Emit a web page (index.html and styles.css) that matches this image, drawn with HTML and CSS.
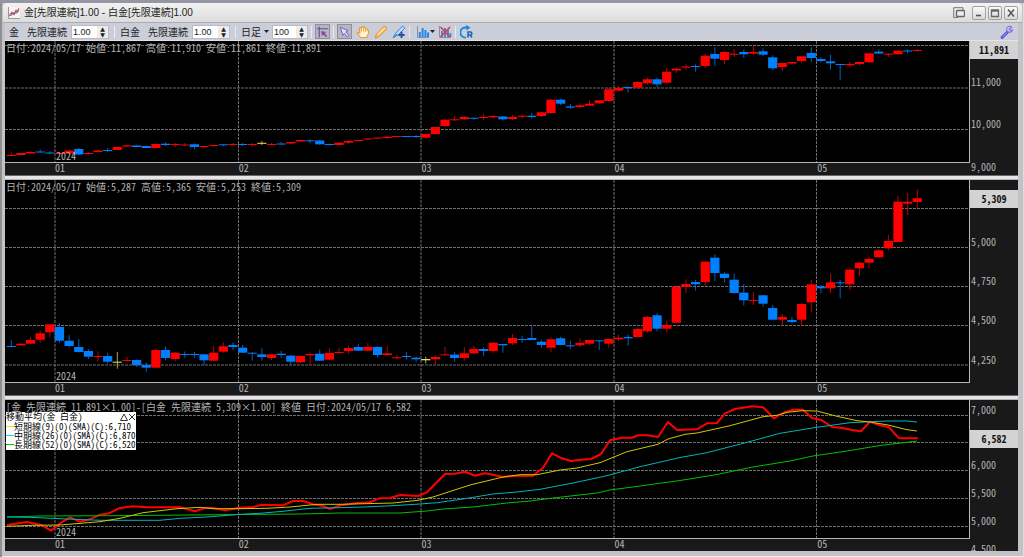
FILE: index.html
```html
<!DOCTYPE html>
<html lang="ja">
  <head>
    <meta charset="utf-8" />
    <title>金[先限連続]1.00 - 白金[先限連続]1.00</title>
    <link rel="stylesheet" href="styles.css">
  </head>
  <body>
    <div class="window">
      <header class="titlebar">
        <svg class="app-icon" viewBox="0 0 12 12">
          <rect x="0" y="0" width="12" height="12" fill="#f4f4f4" />
          <path d="M0.5 0V11.5H12" fill="none" stroke="#999" />
          <path d="M1.5 9L4 5.5L6 7.5L8 3.5L9 5L11 1.5" fill="none" stroke="#d23a3a" stroke-width="1.3" />
          <path d="M1.5 6.5L3.5 8.5L6 5L8 6.5L11 4" fill="none" stroke="#5b8fd6" />
        </svg>
        <h1>金[先限連続]1.00 - 白金[先限連続]1.00</h1>
        <button type="button" class="detach" aria-label="切り離し">
          <svg viewBox="0 0 12 12">
            <path d="M5 10.5H0.7V0.7H10V3" fill="none" stroke="#777" />
            <rect x="3.5" y="3.5" width="8" height="6" rx="1" fill="#eee" stroke="#666" stroke-width="1.4" />
          </svg>
        </button>
        <button type="button" class="win-btn" aria-label="最小化">
          <svg viewBox="0 0 10 10"><path d="M2 7.5H7" stroke="#555" stroke-width="1.6" /></svg>
        </button>
        <button type="button" class="win-btn" aria-label="最大化">
          <svg viewBox="0 0 10 10"><path d="M1.5 2H8.5V8.5H1.5ZM1.5 3H8.5" fill="none" stroke="#666" stroke-width="1.3" /></svg>
        </button>
        <button type="button" class="win-btn" aria-label="閉じる">
          <svg viewBox="0 0 10 10"><path d="M2 1.5L8 8.5M8 1.5L2 8.5" stroke="#555" stroke-width="1.5" /></svg>
        </button>
      </header>

      <div class="toolbar">
        <span class="brand gold">金</span>
        <label for="ratio1">先限連続</label>
        <div class="spinner">
          <input type="text" id="ratio1" value="1.00" />
          <span class="spin"><button type="button" aria-label="増やす">▲</button><button type="button" aria-label="減らす">▼</button></span>
        </div>
        <i class="sep"></i>
        <span class="brand">白金</span>
        <label for="ratio2">先限連続</label>
        <div class="spinner">
          <input type="text" id="ratio2" value="1.00" />
          <span class="spin"><button type="button" aria-label="増やす">▲</button><button type="button" aria-label="減らす">▼</button></span>
        </div>
        <i class="sep"></i>
        <div class="period">
          <select id="period" aria-label="足種">
            <option>日足</option>
            <option>週足</option>
            <option>月足</option>
          </select>
          <svg class="caret" viewBox="0 0 5 3"><path d="M0 0H5L2.5 3Z" /></svg>
        </div>
        <div class="spinner bars">
          <input type="text" id="bars" value="100" aria-label="本数" />
          <span class="spin"><button type="button" aria-label="増やす">▲</button><button type="button" aria-label="減らす">▼</button></span>
        </div>
        <i class="sep tight"></i>
        <button type="button" class="tool on" aria-label="十字カーソル">
          <svg viewBox="0 0 14 14">
            <path d="M3.5 1V13M1 3.5H13" stroke="#6a4a9c" stroke-width="1.2" />
            <path d="M5.5 6L11 7L9.3 8.4L12 11.2L10.8 12.4L8 9.7L6.5 11.2Z" fill="#8a3fb0" />
          </svg>
        </button>
        <i class="sep tight"></i>
        <button type="button" class="tool on" aria-label="選択">
          <svg viewBox="0 0 14 14">
            <path d="M2.5 2L10.8 5.4L8.4 6.9L11.8 10.8L10 12.3L6.8 8.5L5.2 10.6Z" fill="#e6dcff" stroke="#6b55c4" />
          </svg>
        </button>
        <button type="button" class="tool" aria-label="移動">
          <svg viewBox="0 0 14 14">
            <path d="M4.5 12.5L1.2 8.2Q1.4 6.6 3.8 8L3.5 3.2Q4.6 2 5.3 3.4L5.9 2Q7 1 7.6 2.4L8 2.2Q9.2 1.8 9.6 3.4L9.9 3.5Q11.2 3.4 11.5 5Q13 5.6 12.5 8.4L10.6 12.5Z" fill="#fff3d8" stroke="#eb9a36" stroke-width="1.2" />
            <path d="M5.5 3.5V6.5M7.7 3V6.3M9.7 4V6.7" stroke="#eb9a36" />
          </svg>
        </button>
        <button type="button" class="tool" aria-label="ライン">
          <svg viewBox="0 0 14 14">
            <path d="M10.5 1L13 3.5L5 11.5L1.2 13L2.4 9.2Z" fill="#ffc45d" stroke="#e38b28" />
            <path d="M4 9.5L10.5 3" stroke="#ffe9b8" stroke-width="1.3" />
          </svg>
        </button>
        <button type="button" class="tool" aria-label="ライン編集">
          <svg viewBox="0 0 14 14">
            <path d="M10.5 1L12.8 3.2L6.5 9.5L1.2 12.6L3.6 8.2Z" fill="#b9dcff" stroke="#3f7fd0" />
            <path d="M1 13L5 8.8" stroke="#3f7fd0" />
            <path d="M9.5 6.8V13M6.4 9.9H12.6" stroke="#27529f" stroke-width="2" />
          </svg>
        </button>
        <i class="sep"></i>
        <button type="button" class="tool menu" aria-label="テクニカル">
          <svg viewBox="0 0 14 14">
            <path d="M1.5 1V12.5H13" fill="none" stroke="#8292ae" />
            <path d="M3.8 12V7M6.6 12V3M9.4 12V5M12 12V7.5" stroke="#2388e8" stroke-width="2" />
          </svg>
        </button>
        <svg class="caret" viewBox="0 0 5 3"><path d="M0 0H5L2.5 3Z" /></svg>
        <button type="button" class="tool" aria-label="テクニカル削除">
          <svg viewBox="0 0 14 14">
            <path d="M1.5 1V12.5H13" fill="none" stroke="#8292ae" />
            <path d="M4 12V6M7 12V3M10 12V5M12.4 12V8" stroke="#3b8fe0" stroke-width="2" />
            <path d="M2.5 2L12 12M12 2L2.5 12" stroke="#e0394a" stroke-width="1.7" />
          </svg>
        </button>
        <i class="sep tight"></i>
        <button type="button" class="tool" aria-label="更新">
          <svg viewBox="0 0 14 14">
            <path d="M6 12.5A5 5 0 1 1 7 2.8" fill="none" stroke="#1b86dc" stroke-width="1.8" />
            <path d="M6 0L10.5 2.6L6.5 5.6Z" fill="#1b86dc" />
            <path d="M8 12.5V7H10.4A1.5 1.5 0 0 1 10.4 10H8.5M10 10L12 12.5" fill="none" stroke="#1766ba" stroke-width="1.5" />
          </svg>
        </button>
        <button type="button" class="tool settings" aria-label="設定">
          <svg viewBox="0 0 14 14">
            <path d="M2.2 12.4L8 6.6" stroke="#5b50e0" stroke-width="3" stroke-linecap="round" />
            <path d="M11.8 2.4A2.9 2.9 0 1 0 12.4 5L10 5.4L8.9 4Z" fill="#e4e2ff" stroke="#7d74e8" stroke-width="1.2" />
            <path d="M2.4 12.2L7 7.6" stroke="#a9a4f4" />
          </svg>
        </button>
      </div>

      <main class="charts">
        <section class="panel gold-panel" id="goldPanel">
          <div class="plot">
            <svg class="canvas" viewBox="5 41 964 121" preserveAspectRatio="none"></svg>
            <p class="readout">日付:2024/05/17 始値:11,867 高値:11,910 安値:11,861 終値:11,891</p>
            <span class="year">2024</span>
          </div>
          <div class="scale"></div>
          <div class="months"></div>
        </section>

        <section class="panel platinum-panel" id="platinumPanel">
          <div class="plot">
            <svg class="canvas" viewBox="5 180 964 202" preserveAspectRatio="none"></svg>
            <p class="readout">日付:2024/05/17 始値:5,287 高値:5,365 安値:5,253 終値:5,309</p>
            <span class="year">2024</span>
          </div>
          <div class="scale"></div>
          <div class="months"></div>
        </section>

        <section class="panel spread-panel" id="spreadPanel">
          <div class="plot">
            <svg class="canvas" viewBox="5 400 964 138" preserveAspectRatio="none"></svg>
            <p class="readout">[金 先限連続 11,891×1.00]－[白金 先限連続 5,309×1.00] 終値 日付:2024/05/17 6,582</p>
            <div class="legend">
              <div class="legend-head">
                <span>移動平均(金 白金)</span>
                <button type="button" aria-label="折りたたむ"><svg viewBox="0 0 8 8"><path d="M4 1L7.5 7.5H0.5Z" /></svg></button>
                <button type="button" aria-label="閉じる"><svg viewBox="0 0 8 8"><path d="M1 1L7 7M7 1L1 7" /></svg></button>
              </div>
              <div class="legend-row short">短期線(9)(0)(SMA)(C):6,710</div>
              <div class="legend-row middle">中期線(26)(0)(SMA)(C):6,870</div>
              <div class="legend-row long">長期線(52)(0)(SMA)(C):6,520</div>
            </div>
            <span class="year">2024</span>
          </div>
          <div class="scale"></div>
          <div class="months"></div>
        </section>
      </main>
    </div>
    <script src="chart.js"></script>
  </body>
</html>
```

FILE: styles.css
```css
* {
  box-sizing: border-box;
}

body {
  margin: 0;
  background: #a5a5a8;
  font-family: "Noto Sans CJK JP", sans-serif;
  font-size: 10px;
  color: #222;
}

button {
  padding: 0;
  border: none;
  background: none;
  font: inherit;
  cursor: pointer;
}

svg {
  display: block;
}

.window {
  display: flex;
  flex-direction: column;
  height: 100vh;
  min-height: 400px;
  padding: 0 6px 6px 5px;
  background: #c3c3c6;
  border-top: 3px solid #9497a1;
  box-shadow: inset 2px 0 #8f8f91, inset -1px 0 #dcdce4, inset 0 -1px #f0f0f0;
}

/* title bar */
.titlebar {
  display: flex;
  flex: none;
  align-items: center;
  height: 20px;
  margin-left: -2px;
  margin-right: -4px;
  padding: 0 4px 0 5px;
  background: linear-gradient(#f2f2f2, #dcdcdc);
  border-bottom: 1px solid #aaacb2;
  border-radius: 4px 4px 0 0;
}

.app-icon {
  width: 12px;
  height: 12px;
  margin-right: 4px;
}

.titlebar h1 {
  flex: 1;
  margin: 0;
  font-family: "Liberation Sans", "Noto Sans CJK JP", sans-serif;
  font-size: 10px;
  font-weight: normal;
  line-height: 18px;
  white-space: nowrap;
}

.detach {
  margin-right: 5px;
}

.detach svg {
  width: 12px;
  height: 12px;
}

.win-btn {
  display: flex;
  align-items: center;
  justify-content: center;
  width: 14px;
  height: 14px;
  margin-left: 2px;
  background: linear-gradient(#fafafa, #d8d8d8);
  border: 1px solid #a2a2a2;
  border-radius: 2px;
}

.win-btn svg {
  width: 10px;
  height: 10px;
}

/* toolbar */
.toolbar {
  display: flex;
  flex: none;
  align-items: center;
  height: 18px;
  padding: 0 4px;
  background: #cbced8;
  border-bottom: 1px solid #e2e4ea;
  white-space: nowrap;
}

.brand {
  margin-right: 8px;
}

.toolbar label {
  margin-right: 4px;
}

.spinner {
  display: flex;
  width: 38px;
  height: 14px;
  background: #fff;
  border: 1px solid #b9bcc4;
}

.spinner input {
  flex: 1;
  min-width: 0;
  padding: 0 0 0 1px;
  border: none;
  outline: none;
  background: none;
  font-family: "Liberation Sans", sans-serif;
  font-size: 9px;
  line-height: 12px;
  color: #222;
}

.spin {
  display: flex;
  flex-direction: column;
  width: 11px;
  background: #ececec;
}

.spin button {
  height: 6px;
  font-family: "DejaVu Sans", sans-serif;
  font-size: 6px;
  line-height: 6px;
  color: #222;
}

.spinner.bars {
  width: 36px;
}

.sep {
  width: 1px;
  height: 12px;
  margin: 0 5px;
  background: #e9ebf0;
}

.sep.tight {
  margin: 0 3px;
}

.period {
  display: flex;
  align-items: center;
  margin-right: 3px;
}

.period select {
  width: 22px;
  padding: 0;
  border: none;
  outline: none;
  appearance: none;
  background: none;
  font: inherit;
  color: #222;
}

.caret {
  width: 5px;
  height: 3px;
  fill: #222;
  pointer-events: none;
}

.period .caret {
  margin-left: 1px;
}

.tool {
  display: flex;
  align-items: center;
  justify-content: center;
  width: 15px;
  height: 15px;
  margin-right: 3px;
}

.tool svg {
  width: 14px;
  height: 14px;
}

.tool.on {
  background: #b4b6c0;
  border: 1px solid #8e9099;
}

.tool + .sep {
  margin-left: 0;
}

.tool.menu {
  margin-right: 0;
}

.toolbar > .caret {
  margin-right: 2px;
}

.tool.settings {
  margin-left: auto;
  margin-right: 0;
}

/* chart panels */
.charts {
  display: flex;
  flex: 1;
  flex-direction: column;
  gap: 5px;
  min-height: 0;
  background: #e6e4e6;
}

.panel {
  position: relative;
  display: grid;
  grid-template-columns: minmax(0, 1fr) 48px;
  grid-template-rows: minmax(0, 1fr) 12px;
  min-height: 0;
  background: #191919;
  color: #b4b4b4;
  font-feature-settings: "hwid";
}

.panel + .panel {
  box-shadow: 0 -1px #b5b3b5, 0 -4px #e6e4e6, 0 -5px #6a686a;
}

.gold-panel {
  flex: 134 1 0;
}

.platinum-panel {
  flex: 215 1 0;
}

.spread-panel {
  flex: 151 1 0;
}

.plot {
  position: relative;
  min-height: 0;
  overflow: hidden;
  background: #000;
  border-right: 1px solid #b8b8b8;
  border-bottom: 1px solid #b8b8b8;
}

.canvas {
  position: absolute;
  inset: 0;
  width: 100%;
  height: 100%;
}

.readout {
  position: absolute;
  top: 1px;
  left: 1px;
  margin: 0;
  line-height: 11px;
  white-space: nowrap;
}

.year {
  position: absolute;
  left: 51px;
  bottom: 0;
  line-height: 12px;
}

.scale {
  position: relative;
  grid-row: 1 / 3;
  grid-column: 2;
  overflow: hidden;
}

.tick {
  position: absolute;
  left: 1px;
  height: 12px;
  margin-top: -12px;
  line-height: 12px;
}

.last-price {
  position: absolute;
  left: 0;
  right: 0;
  height: 18px;
  background: #d3d3d3;
  color: #111;
  font-weight: bold;
  line-height: 17px;
  text-align: center;
}

.months {
  position: relative;
  grid-row: 2;
  grid-column: 1;
}

.month {
  position: absolute;
  top: -1px;
  line-height: 12px;
}

.grid-line {
  stroke: #6e6e6e;
  stroke-dasharray: 3 1;
  vector-effect: non-scaling-stroke;
}

.up {
  fill: #ff0000;
}

.down {
  fill: #0080ff;
}

.flat {
  fill: #e8e060;
}

.wick {
  opacity: 0.75;
}

.line {
  fill: none;
  stroke-width: 1;
  stroke-linejoin: round;
  vector-effect: non-scaling-stroke;
}

.line.spread {
  stroke: #ff0000;
  stroke-width: 2;
}

.line.short {
  stroke: #d0c800;
}

.line.middle {
  stroke: #00b4bc;
}

.line.long {
  stroke: #00c000;
}

/* moving average legend */
.legend {
  position: absolute;
  top: 12px;
  left: 1px;
  width: 130px;
  padding-bottom: 1px;
  background: #fff;
  color: #000;
  font-size: 9px;
  line-height: 9px;
  white-space: nowrap;
}

.legend-head {
  display: flex;
  height: 10px;
}

.legend-head span {
  flex: 1;
}

.legend-head svg {
  width: 8px;
  height: 8px;
  fill: none;
  stroke: #333;
}

.legend-row {
  display: flex;
  align-items: center;
  height: 9px;
}

.legend-row::before {
  content: "";
  flex: none;
  width: 8px;
  height: 1px;
  background: #f0e800;
}

.legend-row.middle::before {
  background: #00e0e8;
}

.legend-row.long::before {
  background: #00c800;
}
```

FILE: chart.js
```js
const NS = 'http://www.w3.org/2000/svg';
const FIRST_X = 11.3;
const STEP = 9.638;
const BODY = 9.2;

// first bar of each month
const months = [['01', 55], ['02', 238.5], ['03', 421], ['04', 614], ['05', 816.5]];

// one bar per entry: colour, high, body top, body bottom, low
const gold = `r152.3,155,156,156 r153,153,155,155 r151,152,153.5,154 b149.5,151.5,152.5,152.5 b151,152.5,153.5,154
r152,153,154,154 r149.5,150.5,153.5,154 b148,149,154.5,155 r152,153,154,154.5 r150,150.5,152,152.5
b148,150,151,152 r147,147,150,150 r145,145.3,146.5,147 b145,145.5,147,147 b145.5,146,148,148
r143.5,144,148,148 b142.3,143.7,145,146 r143,144,145,147 r143,144.5,145.5,146 b143.5,144.3,147,149.5
r146,146,147,148 r145,145,146,146.5 b144,144.3,145.3,146 r143,144,145,145.3 b143,144,145,146
r143,144,145,146.5 y141,142.8,143.8,145 r143,144,145,145 b142,143.5,144.5,145 r142,142,143.5,144
r139.5,140,141.5,142 b139.5,140.3,141.3,143 b140,140.5,144.3,145 b143.5,144,145,145.5 r142,142.7,145,145
r140.5,141,142.7,144 r139.5,140,141,141 r138,138.5,139.5,140 r137.5,137.6,138.6,138.7 r135.7,136.7,138,139
r136,136,137,137 b136,136,137,137 b135.3,136,137,138 r133.7,134,137.7,138.5 r126.7,127,134,135
r119,119.7,126,127 r115.7,119.3,120.3,120.6 r116,117,119.3,120 b117.7,117.8,118.8,119.7 r113.7,117,118,120.3
r115,116,117.3,118.5 b116,116.5,119.3,120.5 r115,117,119,120 r115,115.7,116.7,118.5 b113,115.7,117,118.3
r112,112.3,116,117 r99,99.7,113,114 b98.7,99.7,103.7,105.3 b104,106.5,107.7,108.7 r103.3,105.3,107,108
r100.3,103.7,105.7,106 r100,100.3,103.3,104 r88,89.3,101,101.5 r86,88,90.7,91.3 b86.5,87,88,92.7
r81,82,87.7,88.5 r77.7,79.3,83.3,84.7 b77.7,79.3,84.3,87.3 r67.7,71.7,82.7,82.7 r67.3,68.7,70.5,73
r64.3,66.5,67.6,70 b64.3,66,67,71.7 r54,55.7,66,68 b47.3,54,58.7,66 r51.5,52,60,64
r49.3,53.7,54.7,57 b49.3,52,54.3,58 r46,52,53.7,54.5 b48.3,51.3,54.7,56 b55.3,57.3,68.3,69.7
r62.7,63,67,70.7 r61.5,62,63.5,65 r56,56.3,61,63 b47.3,53,58,61.7 b57,59,61,62.7
b54.7,61.3,63.3,69.7 b63.7,64,65,80.3 r62,64,65.3,67.3 r61.5,62,64,65.7 r53,53.3,62.3,63
b49.3,51.7,53.5,54 r53.3,53.7,54.7,57 r50,50.7,54.3,54.3 b49.3,50.5,51.5,53.7 r49,50,51,51.5`;

const platinum = `b340,346,347,347 r343,343.7,345.3,346 r337.3,340,343.7,344.5 r330.3,333.3,339.7,342.7 r324,324.3,332.3,337.3
b323,327,340.7,342.7 b335.3,340.7,346,347.5 b339,347,352,352.5 b349,351,356.7,359 r351.3,356,357,361.3
b352.7,356,361.7,363.7 y352,361.7,362.7,368.7 r357,360,361,361.5 b359.5,360,365,367 b362.7,365,367.7,371.7
r348.5,350,367.7,368 b346.7,350,358,360.3 r352,352.7,359,361.3 b351.5,354,355,357.7 b352,354,355,358
b354,354.3,360.3,364.7 r346,352.7,360.7,361 r342.3,346.3,351.7,352.7 b342.3,345,347,350 b345,347.7,352.7,353
b352.5,352.7,353.7,360.7 b348.3,354.3,357,360.7 r354,354.3,358,360 b351,353.7,355,358.3 b355,355.7,361.7,364.7
r356,356,362.3,363.3 r352.7,354,355.3,365.3 b349.7,353.7,360.7,361 r348.3,353,359.7,360.5 r348,352,353,353.3
r345.7,348,351,354 b343.7,347,350.7,351 r343,347,350.7,351.5 b346,347,355,357.3 r346,353.3,355,355.5
r355.3,357.3,358.3,359.3 b352,356,357,359.3 b357,357.7,359.3,361.7 y356.7,359,360.3,363.3 r355.3,357,359.3,365
r347,354.3,355.3,355.5 b352,354.7,358,361.7 r347,353.3,358,360.7 r345.7,349,353.3,354 b347,349,351,356
r342.5,342.7,351,352.7 b343.7,344,345.3,352.7 r334,338,343.3,345 b335.7,339,340,342.7 b326,338,340,340.3
b339.7,341.7,345,347.7 r337.7,339.3,347.7,351.7 b336.7,338.3,345,345.3 b340.7,345.3,346.3,349 r338.3,343,345.3,347
r340,340,343.7,345.3 b340,340.3,341.3,350 r339,339,343.7,347.7 r334.7,337.7,339.3,341 b335,337,338.3,345.7
r328,329,337,337.3 r316,317,331.3,333 b313.3,315.3,328.7,331.3 r321,325,328.7,332.3 r285,286.7,322.7,323
r279.3,284,286.7,293 b280,282,284.3,290.7 r261,261.7,282,286.3 b254.3,257.7,273,281 b272.3,273.7,278,282.3
b273.7,279.7,293,293.5 b284,292.7,300.3,305.3 r292,300,301,305 b295,295.3,303.7,306.7 b305,308,319.7,320
r314,317,319.7,325.3 b317,320,322,323.7 r303,304,319.7,326 r280,284.3,302.3,312.3 b285,286.7,288.3,293.3
r273.7,282.3,288.3,293 b279.7,282.3,283.3,298.3 r267.7,269.7,284.3,290 r262,262.7,268.3,276 r257,259,262.7,267.7
r249,250.3,257.3,257.5 r235,241,248.3,250.7 r195.7,201.7,242,242.3 r193,201.7,203.7,215 r189.3,198.3,202,207.7`;

const lines = {
  long: `7,517 40,516 117,515.7 187,515 300,514 340,513 400,513 427,511 443,509 473,507 507,503 530,501
    553,498 597,493 610,490 640,486 680,480.5 717,474.5 753,467 790,461 813,456 847,451 880,445.5 917,441`,
  middle: `7,517 30,517.3 60,518.7 100,520.3 160,520.3 180,518.3 207,517 240,514.3 260,513.3 283,511.3 310,508.3
    340,507.7 363,507 393,505.7 420,504 437,502.7 463,499 493,494 517,492 540,489.3 573,483 607,475.7 640,466.7
    680,457.5 707,452.7 747,442.3 780,433.3 817,427.3 850,422.7 887,421 907,421 917,422`,
  short: `7,526.3 33,525.3 60,525 100,521.7 120,518.3 143,512.7 177,508.7 200,507.3 213,508.7 240,508.7 267,508.3
    290,507 317,504.3 340,504.3 393,503 418,500.3 433,497 470,485 503,477 520,474.7 537,474.7 560,470 577,468
    600,462.7 627,451.7 658,444.3 668,439 685,434.3 697,433 730,425.7 763,416.7 777,415.3 787,412.3 803,410.7
    817,411 837,416.3 857,420.7 870,422 888,425 907,429.7 917,431`,
  spread: `7,525 27,522 42,525.3 51,530.7 61,522.7 70,517.3 80,521.7 90,519.3 100,514.7 109,513.3 119,508.3
    133,506.3 147,507.3 180,507.3 195,511.3 205,508 213,508 225,510.3 238,508 253,507 262,504.7 283,505.3
    293,501 303,501 313,504.3 322,505.7 330,509 340,505.5 357,503 370,502.3 379,498.3 390,498 400,495 418,496
    427,492.3 445,474 455,473.7 465,471.7 475,475.7 485,473.3 493,474.7 503,477 513,476 533,475.7 543,467.7
    552,453.3 562,458.3 571,461 581,459.7 591,459 601,454 610,440.3 622,437.7 632,437.7 638,435.3 648,435.3
    658,437 668,422 677,430 697,429.3 707,423.3 717,423 725,413.3 735,409 752,406.3 763,407.3 774,418.3
    783,413 793,409.7 803,409.7 812,418 822,420.3 832,427 841,427.7 852,430 861,431.3 870,421.7 880,425.3
    889,427.3 899,438.3 918,438.3`
};

function add(svg, name, attrs) {
  const el = document.createElementNS(NS, name);
  for (const key in attrs) {
    el.setAttribute(key, attrs[key]);
  }
  svg.appendChild(el);
}

function label(parent, className, text, side, value) {
  const el = document.createElement('span');
  el.className = className;
  el.textContent = text;
  el.style[side] = value;
  parent.appendChild(el);
}

// ticks: [text, y]; an empty text draws the grid line only
function drawPanel(id, ticks, last) {
  const panel = document.getElementById(id);
  const svg = panel.querySelector('.canvas');
  const box = svg.viewBox.baseVal;
  const scale = panel.querySelector('.scale');
  const topOf = y => `calc((100% - 12px) * ${((y - box.y) / box.height).toFixed(4)})`;

  ticks.forEach(([text, y]) => {
    add(svg, 'line', { class: 'grid-line', x1: box.x, x2: box.x + box.width, y1: y, y2: y });
    if (text) {
      label(scale, 'tick', text, 'top', topOf(y));
    }
  });
  months.forEach(([text, x]) => {
    add(svg, 'line', { class: 'grid-line', x1: x, x2: x, y1: box.y, y2: box.y + box.height });
    label(panel.querySelector('.months'), 'month', text, 'left', ((x - box.x) / box.width * 100).toFixed(2) + '%');
  });
  label(scale, 'last-price', last[0], 'top', topOf(last[1]));
  return svg;
}

function drawCandles(svg, data) {
  const colors = { r: 'up', b: 'down', y: 'flat' };
  data.split(/\s+/).forEach((bar, i) => {
    const color = colors[bar[0]];
    const [high, top, bottom, low] = bar.slice(1).split(',').map(Number);
    const x = FIRST_X + STEP * i;
    add(svg, 'rect', { class: color + ' wick', x: x - 0.5, y: high, width: 1, height: low - high });
    add(svg, 'rect', { class: color, x: x - BODY / 2, y: top, width: BODY, height: bottom - top });
  });
}

drawCandles(
  drawPanel('goldPanel', [['12,000', 45.5], ['11,000', 88], ['10,000', 129.5], ['9,000', 172]], ['11,891', 41]),
  gold
);
drawCandles(
  drawPanel('platinumPanel', [['', 208.5], ['5,000', 247.5], ['4,750', 286.5], ['4,500', 325.5], ['4,250', 365]], ['5,309', 190]),
  platinum
);
const spread = drawPanel(
  'spreadPanel',
  [['7,000', 415.5], ['', 442.5], ['6,000', 470.5], ['5,500', 498.5], ['5,000', 526.5], ['4,500', 554]],
  ['6,582', 430]
);
['spread', 'long', 'middle', 'short'].forEach(name => {
  add(spread, 'polyline', { class: 'line ' + name, points: lines[name] });
});
```
